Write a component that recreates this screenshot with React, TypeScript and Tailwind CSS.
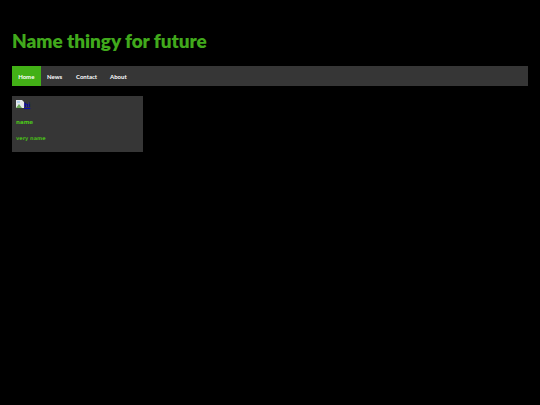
export default function App() {
  return (
    <div className="min-h-[405px] w-[540px] overflow-hidden bg-black px-3 pt-[27px] font-['Lato',sans-serif]">
      <h1 className="h-[28px] text-[19px] font-extrabold leading-[28px] tracking-[-0.05px] text-[#41a91c] whitespace-nowrap">Name thingy for future</h1>
      <nav className="mt-[11px] flex h-[20px] w-[516px] items-center bg-[#363636] text-[6px] font-bold text-white">
        <a className="flex h-full w-[28.5px] items-center justify-center bg-[#42b016]">Home</a>
        <a className="ml-[6.5px] w-[15px]">News</a>
        <a className="ml-[14px] w-[22px]">Contact</a>
        <a className="ml-[12px]">About</a>
      </nav>
      <section className="mt-[10px] h-[56px] w-[131px] bg-[#363636] px-1 pt-[4px] font-['DejaVu_Sans',sans-serif]">
        <a className="flex h-[9px] items-start text-[6px] font-bold leading-[9px] text-[#0a0ab0] underline">
          <svg width="8" height="9" viewBox="0 0 8 9" className="shrink-0">
            <path d="M0 0h6l2 2v6H0z" fill="#e4e8ec" />
            <path d="M0 8l3-4 3 4z" fill="#6aa85a" />
            <path d="M1 1h3v2H1z" fill="#b5d2ef" />
          </svg>
          <span>hi</span>
        </a>
        <p className="mt-[9px] h-[8px] text-[5.5px] font-bold leading-[8px] text-[#4cc41a]">name</p>
        <p className="mt-[8px] h-[8px] text-[5px] font-bold leading-[8px] text-[#48b81a]">very name</p>
      </section>
    </div>
  );
}
